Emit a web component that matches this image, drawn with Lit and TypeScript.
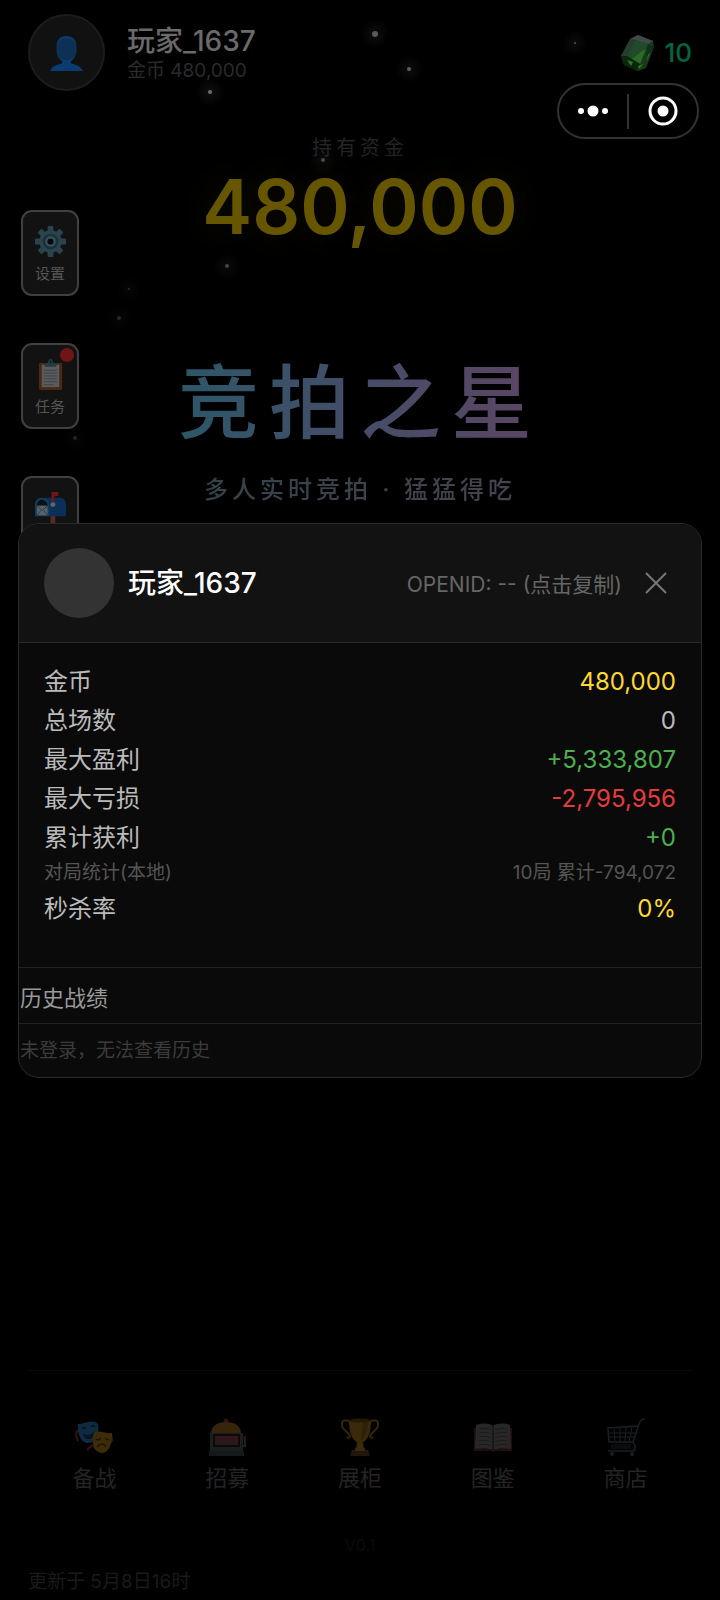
import {css, html, LitElement, svg} from 'lit'
import {customElement, property} from 'lit/decorators.js'
import {classMap} from 'lit/directives/class-map.js'

const ICONS = {
  user: svg`
    <path fill="#0a3c72" d="M16 2c6 0 9 3.600 9 9v4c0 4.500-2 8-5 10v2c3 .8 9 1.500 11 7H1c2-5.500 8-6.200 11-7v-2c-3-2-5-5.500-5-10v-4c0-5.400 3-9 9-9Z"/>
    <path fill="#0d3053" d="M7.500 12c0-5 4-8 8.500-8s8.500 3 8.500 8v3c0 5-3 9-8.500 9s-8.500-4-8.500-9Z"/>`,
  gear: svg`
    <g fill="#29434f">
      <rect x="13" y="0" width="6" height="32" rx="1"/>
      <rect x="13" y="0" width="6" height="32" rx="1" transform="rotate(45 16 16)"/>
      <rect x="13" y="0" width="6" height="32" rx="1" transform="rotate(90 16 16)"/>
      <rect x="13" y="0" width="6" height="32" rx="1" transform="rotate(135 16 16)"/>
      <circle cx="16" cy="16" r="11.500"/>
    </g>
    <circle cx="16" cy="16" r="7" fill="none" stroke="#1b2e38" stroke-width="2"/>
    <circle cx="16" cy="16" r="5" fill="#365462"/>
    <circle cx="16" cy="16" r="3.200" fill="#080a0b"/>`,
  clipboard: svg`
    <rect x="4" y="4" width="24" height="28" rx="1.500" fill="#4a2815"/>
    <path fill="#5c5c5e" d="M7 6h18v23H7Z"/>
    <path stroke="#3c4248" d="M9 11.500h14M9 14.500h14M9 17.500h14M9 20.500h14M9 23.500h14M9 26.500h10"/>
    <path fill="#223a42" d="M10 4h3c.5-2.500 1.500-4 3-4s2.500 1.500 3 4h3v4H10Z"/>
    <circle cx="16" cy="2.800" r="1" fill="#121212"/>`,
  mailbox: svg`
    <path fill="#5a2b22" d="M16 24h5v8h-5Z"/>
    <path fill="#0c2f58" d="M7 6h19c3.500 0 6 3 6 7v12H7Z"/>
    <path fill="#143c5c" d="M0 13c0-4 3-7 7-7s8 3 8 7v12H0Z"/>
    <path fill="#0a1016" d="M2 14c0-3.500 2-6 5-6s6 2.500 6 6v2H2Z"/>
    <path fill="#57626b" d="M2 14h11v10H2Z"/>
    <path fill="none" stroke="#303a42" d="m2 14 5.500 5 5.500-5M2 24l4-5M13 24l-4-5"/>
    <path fill="#6c1717" d="M17 0h7v4h-4v9h-3Z"/>
    <circle cx="18.500" cy="13" r="2.500" fill="#5d666d"/>`,
  masks: svg`
    <path fill="none" stroke="#351212" stroke-width="2" d="M3 12c-3 3-2 7 0 11M35 16c3 4 3 7 0 9M18 27c-3 1-4 4-6 5"/>
    <path fill="#0f2b43" d="M3 6C9 6 14 2 20 4c4 1 4 5 3 11-1 7-6 10-10 10C7 25 2 18 3 6Z"/>
    <path fill="#061521" d="M8 15c4 3 8 2 12-2-1 6-4 9-7 8-3 0-4-2-5-6Z"/>
    <path fill="none" stroke="#061521" stroke-width="1.300" d="M7 11c1-2 3-2 4 0M16 9c1-2 3-2 4 0"/>
    <path fill="#3d2c08" d="M20 14c6-2 10 2 17 1 1 9-3 20-10 20-7-1-10-6-9-13 0-3 0-7 2-8Z"/>
    <path fill="none" stroke="#1e1403" stroke-width="1.300" d="M21 21c1 1 3 1 5-1M30 20c1 2 3 2 4 1M22 29c3-4 7-4 9 0"/>`,
  slot: svg`
    <circle cx="18" cy="3" r="2.500" fill="#341019"/>
    <path fill="#35250b" d="M3 16C3 8 9 4 18 4s15 4 15 12Z"/>
    <path fill="#1a1e1f" d="M2 15h33v19H2Z"/>
    <path fill="#16191a" d="M1 33h35v5H1Z"/>
    <rect x="5" y="16" width="27" height="13" fill="#0a0b0c"/>
    <rect x="7" y="18" width="23" height="9" fill="#221c1c"/>
    <path fill="none" stroke="#451013" stroke-width="2" d="M8 19h5l-3 7M16 19h5l-3 7M24 19h5l-3 7"/>
    <path fill="none" stroke="#202020" stroke-width="2" d="M35 28h2v-8"/>
    <circle cx="37" cy="20" r="2" fill="#34100f"/>`,
  trophy: svg`
    <path fill="none" stroke="#352508" stroke-width="2" d="M10 4C4 1 0 2 1 8c1 5 7 6 8 10 0 2-2 2-3 1M28 4c6-3 10-2 9 4-1 5-7 6-8 10 0 2 2 2 3 1"/>
    <path fill="#3b2a09" d="M8 2h22c0 11-2 19-8 22l1 7h-8l1-7C10 21 8 13 8 2Z"/>
    <path fill="#2e2109" d="M22 3h5c0 9-2 16-7 20Z"/>
    <ellipse cx="19" cy="2.500" rx="11" ry="2" fill="#241a05"/>
    <path fill="#21150e" d="M11 32h16l2 6H9Z"/>
    <path fill="#3a290a" d="M14 30h10v3H14Z"/>`,
  book: svg`
    <path fill="#1f0d0f" d="M0 10h38v23H21l-2 1-2-1H0Z"/>
    <path fill="#272727" d="M2 7c6-2 13-2 17 1 4-3 11-3 17-1l1 24c-7-1-13-1-18 1-5-2-11-2-18-1Z"/>
    <path fill="none" stroke="#1b1b1b" d="M5 11c4-1 8-1 12 1M5 15c4-1 8-1 12 1M5 19c4-1 8-1 12 1M5 23c4-1 8-1 12 1M5 27c4-1 8-1 12 1M33 11c-4-1-8-1-12 1M33 15c-4-1-8-1-12 1M33 19c-4-1-8-1-12 1M33 23c-4-1-8-1-12 1M33 27c-4-1-8-1-12 1"/>
    <path stroke="#141414" stroke-width="1.500" d="M19 8v25"/>`,
  cart: svg`
    <g fill="none" stroke="#182023" stroke-width="1.500">
      <path d="M38 1c-3 0-5 2-6 5l-6 18H2L1 10l30-2M26 24c3 4 3 8 0 9H1"/>
      <path d="m7 10 1 14M13 10v14M19 9l-1 15M25 9l-3 15M2 15h27M2 19h26" stroke-width="1"/>
    </g>
    <path fill="#080d12" d="M4 26h20v5H4Z"/>
    <circle cx="5" cy="36" r="2" fill="#182023"/>
    <circle cx="25" cy="36" r="2" fill="#182023"/>`,
}

const BOXES: Record<string, string> = {
  user: '0 0 32 34',
  gear: '0 0 32 32',
  clipboard: '0 0 32 32',
  mailbox: '0 0 32 32',
}

const icon = (name: string) => html`
  <svg class="icon" viewBox=${BOXES[name] ?? '0 0 38 38'} aria-hidden="true">
    ${ICONS[name]}
  </svg>`

// x, y, radius, brightness
const STARS = [
  [375, 34, 3, 0.32],
  [409, 69, 2, 0.34],
  [575, 43, 1, 0.3],
  [210, 92, 2, 0.4],
  [323, 160, 2, 0.26],
  [227, 266, 2, 0.24],
  [129, 289, 1, 0.16],
  [119, 318, 2, 0.14],
  [75, 438, 2, 0.12],
]

@customElement('star-field')
export class StarField extends LitElement {
  static styles = css`
    :host {
      inset: 0;
      overflow: hidden;
      pointer-events: none;
      position: absolute;
    }
  `

  render() {
    return html`
      <svg width="100%" height="100%" aria-hidden="true">
        <defs>
          <radialGradient id="glow">
            <stop offset="0" stop-color="#fff" stop-opacity=".16"/>
            <stop offset="1" stop-color="#fff" stop-opacity="0"/>
          </radialGradient>
        </defs>
        ${STARS.map(([x, y, r, o]) => svg`
          <circle cx=${x} cy=${y} r=${r + 12} fill="url(#glow)" opacity=${o}/>
          <circle cx=${x} cy=${y} r=${r} fill="#fff" opacity=${o}/>`)}
      </svg>`
  }
}

@customElement('home-screen')
export class HomeScreen extends LitElement {
  static styles = css`
    :host {
      display: flex;
      flex: 1;
      flex-direction: column;
    }

    button {
      background: none;
      border: none;
      color: inherit;
      cursor: pointer;
      font: inherit;
      padding: 0;
    }

    .icon {
      display: block;
      height: 100%;
      width: 100%;
    }

    .header {
      align-items: center;
      display: flex;
      gap: 22px;
      padding: 14px 28px 0;
    }

    .avatar {
      background: #111;
      border: 2px solid #1c1c1c;
      border-radius: 50%;
      box-sizing: border-box;
      height: 77px;
      padding: 17px 19px;
      width: 77px;
    }

    .who {
      flex: 1;
      padding-top: 4px;
    }

    .name {
      color: #6a6a6a;
      font-size: 28px;
      font-weight: 500;
      line-height: 32px;
    }

    .coins {
      color: #2b2b2b;
      font-size: 19px;
      line-height: 28px;
    }

    .gems {
      align-items: center;
      color: #006640;
      display: flex;
      font-size: 26px;
      font-weight: 500;
      gap: 8px;
    }

    .gem {
      height: 38px;
      width: 38px;
    }

    .hero {
      display: grid;
    }

    .rail,
    .banner {
      grid-area: 1 / 1;
    }

    .rail {
      display: flex;
      flex-direction: column;
      gap: 47px;
      justify-self: start;
      padding: 119px 0 0 21px;
      z-index: 1;
    }

    .tool {
      align-items: center;
      background: #121212;
      border: 2px solid #404040;
      border-radius: 11px;
      box-sizing: border-box;
      color: #555;
      display: flex;
      flex-direction: column;
      font-size: 15px;
      gap: 7px;
      height: 86px;
      line-height: 20px;
      padding-top: 14px;
      position: relative;
      width: 58px;
    }

    .tool .icon {
      height: 31px;
      width: 31px;
    }

    .tool.unread::after {
      background: #701515;
      border-radius: 50%;
      content: '';
      height: 14px;
      position: absolute;
      right: 3px;
      top: 3px;
      width: 14px;
    }

    .banner {
      align-items: center;
      display: flex;
      flex-direction: column;
      padding-top: 43px;
    }

    .funds-label {
      color: #242424;
      font-size: 20px;
      letter-spacing: 4px;
      line-height: 28px;
    }

    .funds {
      color: #665600;
      font-size: 75px;
      font-weight: 600;
      line-height: 90px;
      text-shadow: 0 0 40px rgba(102, 86, 0, 0.2);
    }

    .title {
      background: linear-gradient(90deg, #2c5768, #454d68 50%, #5c4563);
      background-clip: text;
      color: transparent;
      font-size: 81px;
      font-weight: 500;
      letter-spacing: 10px;
      line-height: 96px;
      margin: 103px 0 0;
    }

    .slogan {
      background: linear-gradient(90deg, #33434b, #46434c);
      background-clip: text;
      color: transparent;
      font-size: 24px;
      font-weight: 500;
      letter-spacing: 4px;
      line-height: 32px;
      margin: 23px 0 0;
    }

    .tabs {
      border-top: 1px solid #090909;
      color: #242424;
      display: flex;
      margin: auto 28px 0;
      padding-top: 47px;
    }

    .tab {
      align-items: center;
      display: flex;
      flex: 1;
      flex-direction: column;
      font-size: 22px;
      gap: 6px;
      line-height: 32px;
    }

    .tab .icon {
      height: 38px;
      width: 38px;
    }

    .version {
      color: #0c0c0c;
      font-size: 16px;
      line-height: 20px;
      margin: 41px 0 0;
      text-align: center;
    }

    .updated {
      color: #1a1a1a;
      font-size: 19px;
      line-height: 28px;
      margin: 13px 28px 4px;
    }
  `

  tools = [
    {icon: 'gear', label: '设置'},
    {icon: 'clipboard', label: '任务', unread: true},
    {icon: 'mailbox', label: '邮件'},
  ]

  tabs = [
    {icon: 'masks', label: '备战'},
    {icon: 'slot', label: '招募'},
    {icon: 'trophy', label: '展柜'},
    {icon: 'book', label: '图鉴'},
    {icon: 'cart', label: '商店'},
  ]

  render() {
    return html`
      <header class="header">
        <button class="avatar" aria-label="玩家">${icon('user')}</button>
        <div class="who">
          <div class="name">玩家_1637</div>
          <div class="coins">金币 480,000</div>
        </div>
        <div class="gems">
          <svg class="gem" viewBox="0 0 38 38" aria-hidden="true">
            <path fill="#173a1c" d="M12 5 20 1l15 6 1 6-8 21-8 3-14-6-3-9Z"/>
            <path fill="#44464a" d="m12 5 8-4 15 6-5 3-13-4Z"/>
            <path fill="#263c2f" d="m12 5 5 1-8 16-6 0Z"/>
            <path fill="#1f4a2c" d="m17 6 13 4-8 20-13-8Z"/>
            <path fill="#2c6b22" d="m24 17 4-2-6 15-8-5Z"/>
            <path fill="#0b260e" d="m3 22 6 0 13 8-3 7-13-6Z"/>
            <path fill="#2d7a1d" d="m9 26 6 2-2 4ZM20 32l5-2-4 5ZM30 19l3-3-4 11Z"/>
            <path fill="#0d3016" d="m30 10 6 3-4 6-4 3Z"/>
          </svg>
          <span>10</span>
        </div>
      </header>
      <main class="hero">
        <div class="rail">
          ${this.tools.map(t => html`
            <button class=${classMap({tool: true, unread: !!t.unread})}>
              ${icon(t.icon)}
              <span>${t.label}</span>
            </button>`)}
        </div>
        <div class="banner">
          <div class="funds-label">持有资金</div>
          <div class="funds">480,000</div>
          <h1 class="title">竞拍之星</h1>
          <p class="slogan">多人实时竞拍 · 猛猛得吃</p>
        </div>
      </main>
      <nav class="tabs">
        ${this.tabs.map(t => html`
          <button class="tab">
            ${icon(t.icon)}
            <span>${t.label}</span>
          </button>`)}
      </nav>
      <p class="version">V0.1</p>
      <p class="updated">更新于 5月8日16时</p>`
  }
}

@customElement('profile-dialog')
export class ProfileDialog extends LitElement {
  static styles = css`
    :host {
      align-items: center;
      display: flex;
      inset: 0;
      justify-content: center;
      position: absolute;
      z-index: 2;
    }

    button {
      background: none;
      border: none;
      cursor: pointer;
      font: inherit;
      padding: 0;
    }

    .panel {
      background: #0a0a0a;
      border: 1px solid #2a2a2a;
      border-radius: 21px;
      box-sizing: border-box;
      overflow: hidden;
      width: 95%;
    }

    .head {
      align-items: center;
      background: #121212;
      border-bottom: 1px solid #2a2a2a;
      display: flex;
      padding: 24px 25px;
    }

    .photo {
      background: #333;
      border-radius: 50%;
      height: 70px;
      width: 70px;
    }

    .name {
      color: #fff;
      flex: 1;
      font-size: 28px;
      font-weight: 500;
      line-height: 36px;
      margin: 0 0 0 14px;
    }

    .openid {
      color: #666;
      font-size: 21px;
    }

    .close {
      align-items: center;
      display: flex;
      height: 40px;
      justify-content: center;
      margin-left: 14px;
      width: 40px;
    }

    .close svg {
      height: 22px;
      width: 22px;
    }

    .stats {
      margin: 0;
      padding: 19px 25px 39px;
    }

    .row {
      color: #bbb;
      display: flex;
      font-size: 24px;
      justify-content: space-between;
      line-height: 39px;
    }

    .row dd {
      margin: 0;
    }

    .gold {
      color: #ffd92e;
    }

    .up {
      color: #4caf50;
    }

    .down {
      color: #e53b3f;
    }

    .row.minor {
      color: #555;
      font-size: 19px;
      line-height: 32px;
    }

    .history {
      border-top: 1px solid #222;
      color: #999;
      font-size: 22px;
      font-weight: 400;
      line-height: 32px;
      margin: 0;
      padding: 14px 1px 9px;
    }

    .empty {
      border-top: 1px solid #222;
      color: #3c3c3c;
      font-size: 19px;
      line-height: 28px;
      margin: 0;
      padding: 13px 1px 12px;
    }
  `

  @property()
  name = '玩家_1637'

  stats = [
    {label: '金币', value: '480,000', tone: 'gold'},
    {label: '总场数', value: '0', tone: ''},
    {label: '最大盈利', value: '+5,333,807', tone: 'up'},
    {label: '最大亏损', value: '-2,795,956', tone: 'down'},
    {label: '累计获利', value: '+0', tone: 'up'},
    {label: '对局统计(本地)', value: '10局 累计-794,072', tone: '', minor: true},
    {label: '秒杀率', value: '0%', tone: 'gold'},
  ]

  render() {
    return html`
      <section class="panel" role="dialog" aria-labelledby="name">
        <header class="head">
          <div class="photo"></div>
          <h2 class="name" id="name">${this.name}</h2>
          <button class="openid">OPENID: -- (点击复制)</button>
          <button class="close" aria-label="关闭">
            <svg viewBox="0 0 22 22" fill="none" stroke="#777" stroke-width="2">
              <path d="m1 1 20 20M21 1 1 21"/>
            </svg>
          </button>
        </header>
        <dl class="stats">
          ${this.stats.map(s => html`
            <div class=${classMap({row: true, minor: !!s.minor})}>
              <dt>${s.label}</dt>
              <dd class=${s.tone}>${s.value}</dd>
            </div>`)}
        </dl>
        <h3 class="history">历史战绩</h3>
        <p class="empty">未登录，无法查看历史</p>
      </section>`
  }
}

@customElement('mini-capsule')
export class MiniCapsule extends LitElement {
  static styles = css`
    :host {
      align-items: center;
      background: #000;
      border: 2px solid #333;
      border-radius: 28px;
      box-sizing: border-box;
      display: flex;
      height: 56px;
      position: absolute;
      right: 21px;
      top: 83px;
      width: 142px;
      z-index: 3;
    }

    button {
      align-items: center;
      background: none;
      border: none;
      cursor: pointer;
      display: flex;
      flex: 1;
      justify-content: center;
      padding: 0;
    }

    button + button {
      border-left: 2px solid #333;
      height: 35px;
    }
  `

  render() {
    return html`
      <button aria-label="更多">
        <svg width="30" height="12" viewBox="0 0 30 12" fill="#fff">
          <circle cx="3" cy="6" r="3"/>
          <circle cx="15" cy="6" r="5.500"/>
          <circle cx="27" cy="6" r="3"/>
        </svg>
      </button>
      <button aria-label="退出">
        <svg width="30" height="30" viewBox="0 0 30 30">
          <circle cx="15" cy="15" r="13" fill="none" stroke="#fff" stroke-width="3"/>
          <circle cx="15" cy="15" r="5.500" fill="#fff"/>
        </svg>
      </button>`
  }
}

@customElement('app-root')
export default class AppRoot extends LitElement {
  static styles = css`
    :host {
      background: #000;
      display: flex;
      flex-direction: column;
      font-family: Inter, 'Noto Sans CJK SC', sans-serif;
      min-height: 100vh;
      position: relative;
    }
  `

  render() {
    return html`
      <star-field></star-field>
      <home-screen></home-screen>
      <profile-dialog></profile-dialog>
      <mini-capsule></mini-capsule>`
  }
}
